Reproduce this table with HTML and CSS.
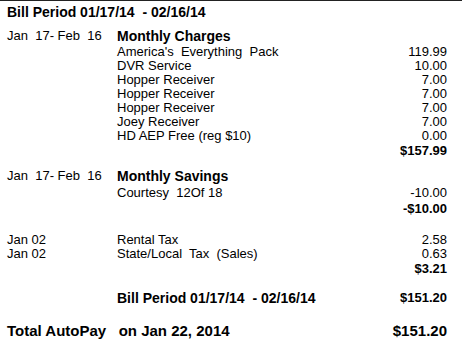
FILE: index.html
```html
<!DOCTYPE html>
<html>
<head>
<meta charset="utf-8">
<link rel="stylesheet" href="styles.css">
</head>
<body>
<div class="title">Bill Period 01/17/14  - 02/16/14</div>

<section class="sec sec-charges">
  <div class="head"><span class="date">Jan  17- Feb  16</span><span class="htext">Monthly Charges</span></div>
  <div class="line"><span></span><span class="desc">America's  Everything  Pack</span><span class="amt">119.99</span></div>
  <div class="line"><span></span><span class="desc">DVR Service</span><span class="amt">10.00</span></div>
  <div class="line"><span></span><span class="desc">Hopper Receiver</span><span class="amt">7.00</span></div>
  <div class="line"><span></span><span class="desc">Hopper Receiver</span><span class="amt">7.00</span></div>
  <div class="line"><span></span><span class="desc">Hopper Receiver</span><span class="amt">7.00</span></div>
  <div class="line"><span></span><span class="desc">Joey Receiver</span><span class="amt">7.00</span></div>
  <div class="line"><span></span><span class="desc">HD AEP Free (reg $10)</span><span class="amt">0.00</span></div>
  <div class="total">$157.99</div>
</section>

<section class="sec sec-savings">
  <div class="head"><span class="date">Jan  17- Feb  16</span><span class="htext">Monthly Savings</span></div>
  <div class="line"><span></span><span class="desc">Courtesy  12Of 18</span><span class="amt">-10.00</span></div>
  <div class="total">-$10.00</div>
</section>

<section class="sec sec-taxes">
  <div class="line"><span class="date">Jan 02</span><span class="desc">Rental Tax</span><span class="amt">2.58</span></div>
  <div class="line"><span class="date">Jan 02</span><span class="desc">State/Local  Tax  (Sales)</span><span class="amt">0.63</span></div>
  <div class="total">$3.21</div>
</section>

<div class="period"><span></span><span class="ptext">Bill Period 01/17/14  - 02/16/14</span><span class="amt">$151.20</span></div>

<div class="autopay"><span class="atext">Total AutoPay   on Jan 22, 2014</span><span class="amt">$151.20</span></div>
</body>
</html>
```

FILE: styles.css
```css
html, body {
  background: #fff;
}
body {
  margin: 0;
  border-top: 1px solid #222;
  padding: 3px 15px 0 7px;
  font-family: "Liberation Sans", Arial, sans-serif;
  font-size: 13px;
  color: #000;
}
.title {
  font-weight: bold;
  font-size: 14px;
  line-height: 16px;
  white-space: pre;
}
.sec-charges { margin-top: 8px; }
.sec-savings { margin-top: 10px; }
.sec-taxes { margin-top: 17px; }
.head,
.line,
.period {
  display: grid;
  grid-template-columns: 110px 1fr auto;
}
.head {
  line-height: 16px;
}
.date, .desc {
  white-space: pre;
}
.htext {
  font-weight: bold;
  font-size: 14px;
}
.head + .line {
  margin-top: 1px;
}
.sec-savings .head + .line {
  margin-top: 2px;
}
.sec-savings .total {
  margin-top: 1px;
}
.line {
  line-height: 14px;
}
.amt {
  text-align: right;
}
.total {
  font-weight: bold;
  text-align: right;
  line-height: 15px;
}
.period {
  margin-top: 14px;
  font-weight: bold;
  font-size: 14px;
  line-height: 16px;
}
.ptext { white-space: pre; }
.period .amt { font-size: 13px; }
.autopay {
  margin-top: 16px;
  display: flex;
  justify-content: space-between;
  font-weight: bold;
  font-size: 15px;
  line-height: 18px;
}
.atext { white-space: pre; }
```
